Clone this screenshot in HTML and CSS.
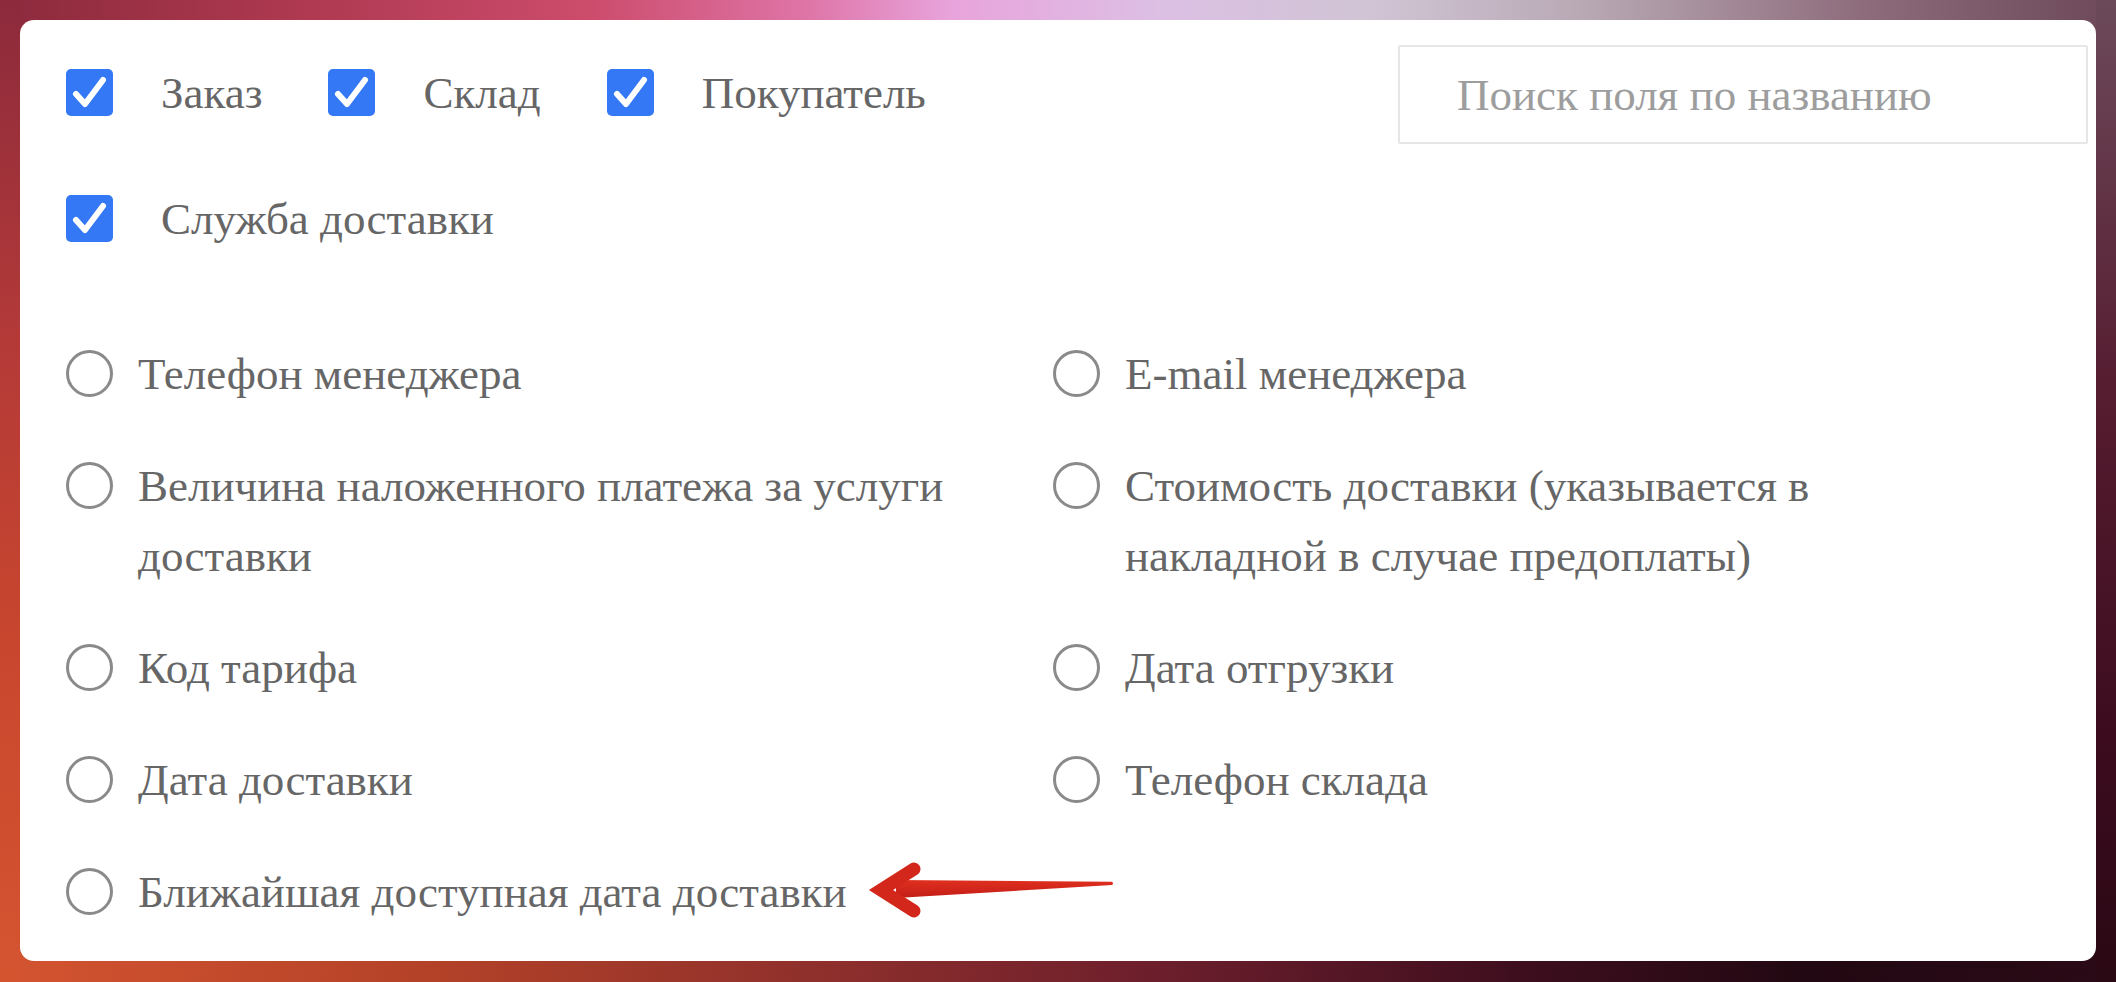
FILE: index.html
```html
<!DOCTYPE html>
<html lang="ru">
<head>
<meta charset="utf-8">
<title>Поля</title>
<link rel="stylesheet" href="styles.css">
</head>
<body>
<div class="card">
  <div class="head">
    <div class="filters">
      <label class="chk"><span class="box"><svg viewBox="0 0 47 47" width="47" height="47"><path d="M10 25 L19 35 L37 11" fill="none" stroke="#fff" stroke-width="6" stroke-linecap="round" stroke-linejoin="round"/></svg></span><span class="lbl">Заказ</span></label>
      <label class="chk"><span class="box"><svg viewBox="0 0 47 47" width="47" height="47"><path d="M10 25 L19 35 L37 11" fill="none" stroke="#fff" stroke-width="6" stroke-linecap="round" stroke-linejoin="round"/></svg></span><span class="lbl">Склад</span></label>
      <label class="chk"><span class="box"><svg viewBox="0 0 47 47" width="47" height="47"><path d="M10 25 L19 35 L37 11" fill="none" stroke="#fff" stroke-width="6" stroke-linecap="round" stroke-linejoin="round"/></svg></span><span class="lbl">Покупатель</span></label>
      <label class="chk"><span class="box"><svg viewBox="0 0 47 47" width="47" height="47"><path d="M10 25 L19 35 L37 11" fill="none" stroke="#fff" stroke-width="6" stroke-linecap="round" stroke-linejoin="round"/></svg></span><span class="lbl">Служба доставки</span></label>
    </div>
    <input class="search" type="text" placeholder="Поиск поля по названию">
  </div>
  <div class="fields">
    <div class="field"><span class="radio"></span><span class="ftext">Телефон менеджера</span></div>
    <div class="field"><span class="radio"></span><span class="ftext">E-mail менеджера</span></div>
    <div class="field"><span class="radio"></span><span class="ftext">Величина наложенного платежа за услуги доставки</span></div>
    <div class="field"><span class="radio"></span><span class="ftext">Стоимость доставки (указывается в накладной в случае предоплаты)</span></div>
    <div class="field"><span class="radio"></span><span class="ftext">Код тарифа</span></div>
    <div class="field"><span class="radio"></span><span class="ftext">Дата отгрузки</span></div>
    <div class="field"><span class="radio"></span><span class="ftext">Дата доставки</span></div>
    <div class="field"><span class="radio"></span><span class="ftext">Телефон склада</span></div>
    <div class="field"><span class="radio"></span><span class="ftext">Ближайшая доступная дата доставки</span></div>
  </div>
  <svg class="arrow" width="260" height="60" viewBox="0 0 260 60">
    <defs>
      <linearGradient id="sh" x1="0" y1="0" x2="0" y2="1">
        <stop offset="0" stop-color="#e0301f"/>
        <stop offset="1" stop-color="#c21d17"/>
      </linearGradient>
    </defs>
    <path d="M36 20 L252 21.8 Q254 23.5 252 25 L36 38 Z" fill="url(#sh)"/>
    <polyline points="54,9 21,30 54,51" fill="none" stroke="#d3271c" stroke-width="13" stroke-linecap="round" stroke-linejoin="miter" stroke-miterlimit="10"/>
  </svg>
</div>
</body>
</html>
```

FILE: styles.css
```css
html, body {
  margin: 0;
  padding: 0;
}

body {
  width: 2116px;
  height: 982px;
  box-sizing: border-box;
  padding: 20px 20px 21px 20px;
  font-family: "Liberation Serif", "Times New Roman", serif;
  background:
    linear-gradient(180deg, #8c2a3c 0%, #b43a38 35%, #c8462e 65%, #d55430 100%) left top / 20px 100% no-repeat,
    linear-gradient(180deg, #6c4a5a 0%, #561c30 40%, #3c0c1e 75%, #2a0814 100%) right top / 20px 100% no-repeat,
    linear-gradient(90deg, #8c2a3c 0%, #b03a52 15%, #cc4c6c 28%, #de74a6 38%, #e8a4dc 45%, #dcc0e4 55%, #d0c4d4 65%, #b8a8b4 75%, #8e6c7c 88%, #6c4858 100%) left top / 100% 50% no-repeat,
    linear-gradient(90deg, #d45430 0%, #b44228 20%, #8c2e2c 40%, #6c1e2c 55%, #3e0e1e 72%, #220812 85%, #2a0a16 100%) left bottom / 100% 50% no-repeat;
}

.card {
  position: relative;
  width: 2076px;
  height: 941px;
  box-sizing: border-box;
  background: #fff;
  border-radius: 14px;
  padding: 25px 8px 0 46px;
  overflow: hidden;
}

.head {
  display: flex;
  justify-content: space-between;
  align-items: flex-start;
}

.filters {
  width: 1300px;
  margin-top: 24px;
  display: flex;
  flex-wrap: wrap;
  column-gap: 66px;
  row-gap: 79px;
}

.chk {
  display: flex;
  align-items: center;
  height: 47px;
}

.box {
  width: 47px;
  height: 47px;
  border-radius: 5px;
  background: #3478f6;
  display: block;
  flex: none;
}

.box svg {
  display: block;
}

.lbl {
  margin-left: 48px;
  font-size: 45px;
  color: #666;
  white-space: nowrap;
}

.search {
  width: 690px;
  height: 99px;
  box-sizing: border-box;
  border: 2px solid #e6e6e6;
  border-radius: 2px;
  padding: 0 0 0 57px;
  font-family: "Liberation Serif", "Times New Roman", serif;
  font-size: 45px;
  color: #666;
  background: #fff;
  outline: none;
}

.search::placeholder {
  color: #9d9d9d;
}

.fields {
  margin-top: 97px;
  padding-right: 200px;
  display: grid;
  grid-template-columns: 987px 1fr;
  row-gap: 42px;
}

.field {
  display: flex;
  align-items: flex-start;
  padding-right: 40px;
}

.radio {
  flex: none;
  width: 47px;
  height: 47px;
  box-sizing: border-box;
  border: 3px solid #8a8a8a;
  border-radius: 50%;
  margin-top: 11px;
}

.ftext {
  margin-left: 25px;
  font-size: 45px;
  line-height: 70px;
  color: #666;
}

.arrow {
  position: absolute;
  left: 840px;
  top: 840px;
}
```
